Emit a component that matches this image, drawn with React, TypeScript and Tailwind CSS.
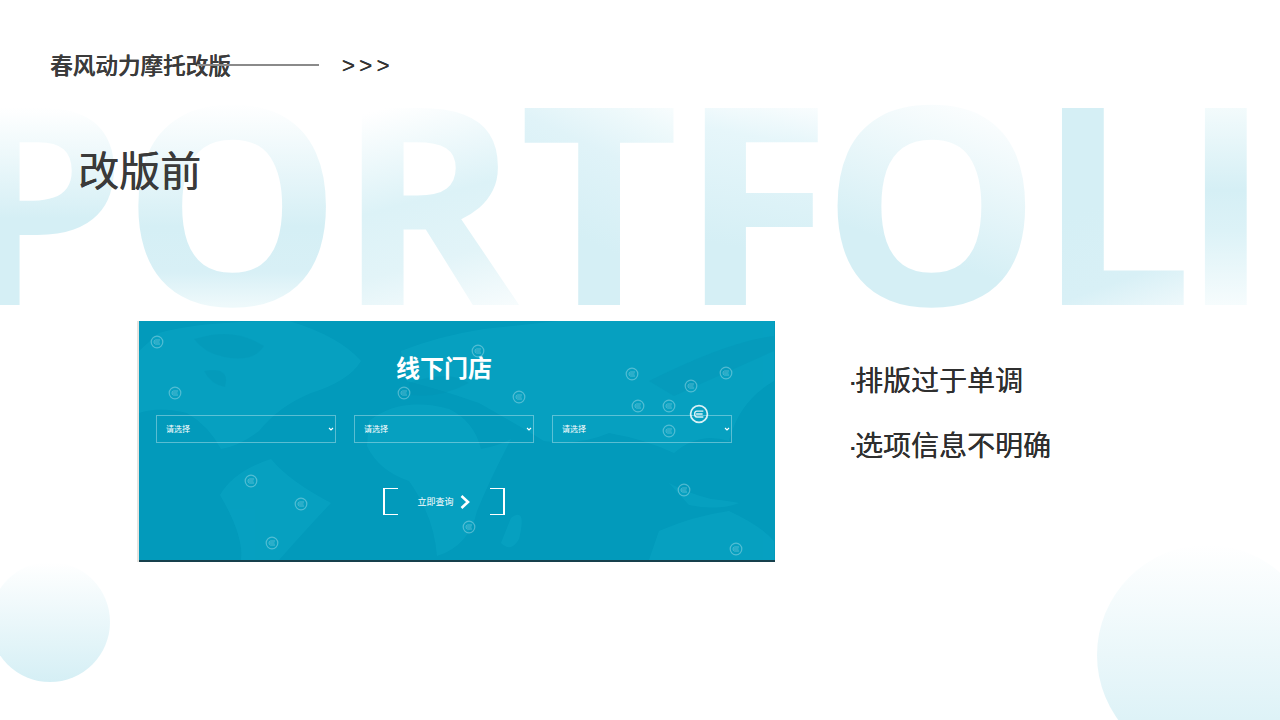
const cjk = "font-['Noto_Sans_CJK_SC','Noto_Sans',sans-serif]";

// each span is 412px tall, the capitals sit between about 28% and 76% of it
const letters = [
  { ch: "P", cls: "bg-[linear-gradient(180deg,#ffffff_28%,#d5eff5_55%,#d5eff5_100%)]" },
  { ch: "O", cls: "ml-[-4px] bg-[linear-gradient(180deg,#ffffff_27%,#d5eff5_57%,#d8f0f6_68%,#eef9fb_76%)]" },
  { ch: "R", cls: "ml-[-5px] bg-[linear-gradient(165deg,#ffffff_28%,#dcf2f7_50%,#e2f4f8_64%,#ffffff_84%)]" },
  { ch: "T", cls: "bg-[linear-gradient(205deg,#ffffff_20%,#eef9fb_30%,#e0f3f8_40%,#d5eff5_60%)]" },
  { ch: "F", cls: "ml-[1px] bg-[linear-gradient(190deg,#ffffff_24%,#e6f6fa_36%,#d5eff5_62%)]" },
  { ch: "O", cls: "ml-[-10px] bg-[linear-gradient(200deg,#ffffff_25%,#d5eff5_62%)]" },
  { ch: "L", cls: "ml-[-4px] bg-[linear-gradient(160deg,#d5eff5_50%,#d8f0f6_68%,#ffffff_86%)]" },
  { ch: "I", cls: "ml-[-13px] bg-[linear-gradient(180deg,#f3fbfc_28%,#d5eff5_48%,#dcf2f7_58%,#f6fcfd_76%)]" },
];

// card-local coordinates of the small logo pins
const pins = [
  [18, 21], [36, 72], [265, 72], [112, 160], [162, 183], [133, 222], [339, 30], [380, 76],
  [493, 53], [552, 65], [587, 52], [499, 85], [530, 85], [530, 110], [545, 169], [330, 206], [597, 228],
];

function Pin({ x, y, big }: { x: number; y: number; big?: boolean }) {
  const s = big ? 1.45 : 1;
  return (
    <g transform={`translate(${x} ${y}) scale(${s})`} fill="none" stroke="#ffffff" opacity={big ? 0.85 : 0.3}>
      <circle r="5.8" strokeWidth="1.2" />
      <path d="M3 -2 H-1.5 Q-3 -2 -3 0 Q-3 2 -1.5 2 H3 M-2 0 H2.5" strokeWidth="1" />
    </g>
  );
}

function WorldMap() {
  return (
    <svg className="absolute inset-0" width="635" height="239" viewBox="0 0 635 239">
      <g fill="#0aa5c4" opacity="0.6">
        <path d="M20 12 Q60 0 150 0 Q200 15 222 40 Q210 60 172 72 Q140 85 120 110 Q100 125 82 128 Q70 105 48 92 Q20 85 0 92 L0 30 Z" />
        <path d="M81 174 Q95 150 132 138 Q150 160 192 182 Q170 205 140 239 L102 239 Q105 215 81 174 Z" />
        <path d="M230 100 Q262 75 310 88 Q335 100 342 128 Q360 125 372 118 Q350 160 338 190 Q330 225 298 235 Q295 195 270 160 Q240 150 228 125 Z" />
        <path d="M262 30 Q300 15 345 8 L420 0 L635 0 L635 60 Q600 80 590 120 Q560 110 535 132 Q505 118 470 112 Q440 125 405 120 Q372 100 340 82 Q300 68 268 60 Z" />
        <path d="M520 210 Q555 195 590 190 Q622 205 635 220 L635 239 L510 239 Z" />
        <path d="M530 162 Q548 172 572 178 Q590 180 600 182 Q580 190 550 184 Z" />
        <path d="M372 197 Q388 185 380 218 Q372 232 362 222 Z" />
      </g>
      <g fill="#0292b2" opacity="0.3">
        <path d="M55 18 Q95 5 125 25 Q115 42 85 36 Q65 32 55 18 Z" />
        <path d="M65 50 Q92 45 86 66 Q72 64 65 50 Z" />
        <path d="M270 62 Q310 48 330 62 Q300 78 272 74 Z" />
        <path d="M510 60 Q590 20 635 15 L635 30 Q590 50 535 75 Z" />
      </g>
      {pins.map(([x, y], i) => (
        <Pin key={i} x={x} y={y} />
      ))}
      <Pin x={560} y={93} big />
    </svg>
  );
}

function FakeSelect() {
  return (
    <div className="flex h-[28px] w-[180px] items-center justify-between border border-white/35 pl-[9px] pr-[1px] text-[8px] text-white">
      <span>请选择</span>
      <svg width="6" height="6" viewBox="0 0 6 6" fill="none" stroke="#ffffff" strokeWidth="1.1">
        <path d="M1 2 L3 4 L5 2" />
      </svg>
    </div>
  );
}

export default function App() {
  return (
    <div className={`relative h-[720px] w-[1280px] overflow-hidden bg-white ${cjk}`}>
      {/* Watermark */}
      <div className="absolute left-[-47px] top-[-8px] flex font-['Open_Sans'] text-[276px] font-bold leading-[412px]">
        {letters.map((l, i) => (
          <span key={i} className={`bg-clip-text text-transparent ${l.cls}`}>
            {l.ch}
          </span>
        ))}
      </div>

      {/* Circles */}
      <div className="absolute left-[-10px] top-[562px] h-[120px] w-[120px] rounded-full bg-gradient-to-b from-white to-[#d5eff5]" />
      <div className="absolute left-[1097px] top-[545px] h-[220px] w-[220px] rounded-full bg-gradient-to-b from-white to-[#d5eff5]" />

      <div className="relative pt-[50px]">
        {/* Header */}
        <div className="flex h-[30px] items-center pl-[50px]">
          <span className="text-[22.6px] font-medium text-[#3b3b3b] [text-shadow:0.4px_0_0_#3b3b3b]">春风动力摩托改版</span>
          <div className="ml-[-34px] h-[2px] w-[122px] bg-[#8a8a8a]" />
          <span className="ml-[23px] font-['Liberation_Sans'] text-[22px] tracking-[4.5px] text-[#333333] [text-shadow:0.4px_0_0_#333333]">&gt;&gt;&gt;</span>
        </div>

        <h1 className="mt-[58px] pl-[78px] text-[41px] font-normal leading-[60px] text-[#3a3a3a] [text-shadow:0.6px_0.4px_0_#3a3a3a]">改版前</h1>

        <div className="mt-[123px] flex items-start pl-[139px]">
          {/* Screenshot card */}
          <div className="relative h-[241px] w-[636px] border-b-2 border-[#17404c] bg-[#029abb] shadow-[-2px_0_0_#e4e4e0]">
            <WorldMap />
            <div className="relative flex h-full flex-col items-center pr-[26px]">
              <h2 className="mt-[28px] text-[24px] font-bold leading-[36px] text-white">线下门店</h2>
              <div className="mt-[30px] flex gap-[18px]">
                <FakeSelect />
                <FakeSelect />
                <FakeSelect />
              </div>
              <div className="mt-[45px] flex h-[27px] w-[122px] items-center justify-between">
                <div className="h-full w-[15px] border-y border-l-2 border-white" />
                <div className="flex items-center gap-[5px] text-[9px] text-white">
                  <span>立即查询</span>
                  <svg width="12" height="14" viewBox="0 0 12 14" fill="none" stroke="#ffffff" strokeWidth="2.6">
                    <path d="M2.5 1 L9 7 L2.5 13" />
                  </svg>
                </div>
                <div className="h-full w-[15px] border-y border-r-2 border-white" />
              </div>
            </div>
          </div>

          {/* Notes */}
          <div className="ml-[73px] mt-[37px] flex flex-col gap-[24px] text-[28px] leading-[42px] text-[#2f2f2f] [text-shadow:0.3px_0_0_#2f2f2f]">
            <p><span className="inline-block w-[7px] font-['Liberation_Sans']">·</span>排版过于单调</p>
            <p className="mt-[-4px]"><span className="inline-block w-[7px] font-['Liberation_Sans']">·</span>选项信息不明确</p>
          </div>
        </div>
      </div>
    </div>
  );
}
